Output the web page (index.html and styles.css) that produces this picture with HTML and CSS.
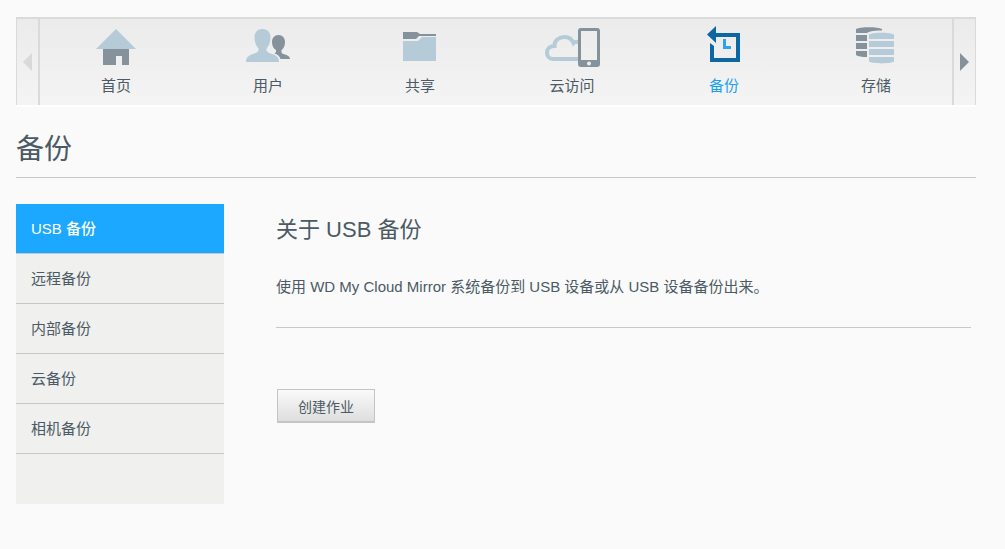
FILE: index.html
```html
<!DOCTYPE html>
<html lang="zh-CN">
<head>
  <meta charset="UTF-8">
  <meta name="viewport" content="width=device-width, initial-scale=1.0">
  <title>备份 - WD My Cloud Mirror</title>
  <link rel="stylesheet" href="styles.css">
</head>
<body>
  <!-- Main navigation -->
  <nav class="main-nav">
    <button class="nav-arrow nav-prev" type="button" aria-label="向左" disabled>
      <svg width="9" height="18" viewBox="0 0 9 18"><path d="M9 0v18L0 9z"/></svg>
    </button>
    <ul class="nav-list">
      <li>
        <a class="nav-item" href="#home">
          <svg class="nav-icon" viewBox="-6 0 60 42">
            <path class="light" d="M24 3L44 23H4z"/>
            <path class="dark" d="M11 23H37V39H30V30H24V39H11z"/>
          </svg>
          首页
        </a>
      </li>
      <li>
        <a class="nav-item" href="#users">
          <svg class="nav-icon" viewBox="-6 0 60 42">
            <path class="dark" d="M34.500 9C38.500 9 41 12 41 16C41 20 39.500 22.500 37.500 24V26.500C38 27.500 39 28 41 28.500C44 29.500 46 30.500 46 33H36.500C35.500 30 33.500 28.500 30.500 27.500L32 26V24C29.500 22.500 28 20 28 16C28 12 30.500 9 34.500 9z"/>
            <path class="light" d="M18.500 3C23.500 3 26.500 6.500 26.500 11C26.500 16 25 20 22.500 22.500V24.500C23 26 25 27 28 28C33 29.500 35 32 35 36H2C2 32 4 29.500 9 28C12 27 14 26 14.500 24.500V22.500C12 20 10.500 16 10.500 11C10.500 6.500 13.500 3 18.500 3z"/>
          </svg>
          用户
        </a>
      </li>
      <li>
        <a class="nav-item" href="#shares">
          <svg class="nav-icon" viewBox="-6 0 60 42">
            <path class="dark" d="M7 6H21L24 8H40V10H23L20 13H7z"/>
            <path class="light" d="M7 15H22L26 11H40V35H7z"/>
          </svg>
          共享
        </a>
      </li>
      <li>
        <a class="nav-item" href="#cloud">
          <svg class="nav-icon" viewBox="-6 0 60 42">
            <path class="cloud" d="M31 33H5C1 33 -1 30 -1 26.500C-1 22.500 2 20 6.500 20C6 14.500 11 11 16.500 11C21 11 24 13.500 25.500 17C27 15.500 29 15.500 31 16.500"/>
            <path class="dark" fill-rule="evenodd" d="M33 2H49Q52 2 52 5V38Q52 41 49 41H33Q30 41 30 38V5Q30 2 33 2zM33 5V34H49V5zM41 35.500A2 2 0 1 0 41 39.500A2 2 0 1 0 41 35.500z"/>
          </svg>
          云访问
        </a>
      </li>
      <li>
        <a class="nav-item active" href="#backups" aria-current="page">
          <svg class="nav-icon" viewBox="-6 0 60 42">
            <path class="blue-dark" d="M7 8.500L16 0V7H40V36H10V17L14 20V32H36V11H16V17z"/>
            <path class="blue" d="M23 13H26V20H31V23H23z"/>
          </svg>
          备份
        </a>
      </li>
      <li>
        <a class="nav-item" href="#storage">
          <svg class="nav-icon" viewBox="-6 0 60 42">
            <path class="dark" d="M4 3C8 0.500 26 0.500 30 3V4.500C24 4.500 18 5 15 7H4zM4 9H15V15H4zM4 17H15V23H4zM4 25H15V31C10 31 6 30.500 4 29z"/>
            <path class="light" d="M17 8.500C21 6 38 6 42 8.500V13H17zM17 15H42V21H17zM17 23H42V29H17zM17 31H42V35.500C38 38 21 38 17 35.500z"/>
          </svg>
          存储
        </a>
      </li>
    </ul>
    <button class="nav-arrow nav-next" type="button" aria-label="向右">
      <svg width="9" height="18" viewBox="0 0 9 18"><path d="M0 0v18L9 9z"/></svg>
    </button>
  </nav>

  <h1>备份</h1>

  <div class="page">
    <!-- Backup types -->
    <nav class="sidebar">
      <a class="active" href="#usb">USB 备份</a>
      <a href="#remote">远程备份</a>
      <a href="#internal">内部备份</a>
      <a href="#cloud-backup">云备份</a>
      <a href="#camera">相机备份</a>
    </nav>

    <main class="content">
      <h2>关于 USB 备份</h2>
      <p>使用 WD My Cloud Mirror 系统备份到 USB 设备或从 USB 设备备份出来。</p>
      <button class="btn" type="button">创建作业</button>
    </main>
  </div>
</body>
</html>
```

FILE: styles.css
```css
* {
  margin: 0;
  padding: 0;
  box-sizing: border-box;
}

body {
  padding: 17px 29px 40px 16px;
  background: #fafafa;
  color: #4b5a64;
  font-family: "Liberation Sans", "Noto Sans CJK SC", sans-serif;
  font-size: 15px;
  line-height: 24px;
}

a {
  color: inherit;
  text-decoration: none;
}

/* Main navigation */
.main-nav {
  display: flex;
  background: linear-gradient(#ebebeb, #f4f4f4);
  border-top: 2px solid #dadada;
  box-shadow: 0 2px 0 #fff;
}

.nav-arrow {
  display: flex;
  align-items: center;
  justify-content: center;
  width: 24px;
  background: none;
  border: 0 solid #dadada;
  cursor: pointer;
}

.nav-arrow svg {
  fill: #85929b;
}

.nav-arrow:disabled {
  cursor: default;
}

.nav-arrow:disabled svg {
  fill: #d9d9d9;
}

.nav-prev {
  border-width: 0 2px 0 1px;
}

.nav-next {
  border-width: 0 1px 0 2px;
}

.nav-list {
  flex: 1;
  display: grid;
  grid-template-columns: repeat(6, 1fr);
  list-style: none;
}

.nav-item {
  display: flex;
  flex-direction: column;
  align-items: center;
  gap: 6px;
  padding: 7px 0;
}

.nav-item.active {
  color: #1f9ff0;
}

.nav-icon {
  width: 60px;
  height: 42px;
}

.light {
  fill: #b5ccd8;
}

.dark {
  fill: #85929b;
}

.cloud {
  fill: none;
  stroke: #b5ccd8;
  stroke-width: 4;
}

.blue-dark {
  fill: #0d67a3;
}

.blue {
  fill: #2ba3ee;
}

h1 {
  margin-top: 25px;
  padding-bottom: 7px;
  border-bottom: 1px solid #c8c8c8;
  font-size: 28px;
  font-weight: normal;
  line-height: 40px;
}

.page {
  display: flex;
  gap: 52px;
  margin-top: 26px;
}

/* Sidebar */
.sidebar {
  flex: none;
  width: 208px;
  padding-bottom: 50px;
  background: #f0f0ee;
}

.sidebar a {
  display: block;
  padding: 13px 15px 12px;
  border-bottom: 1px solid #c4c8ca;
}

.sidebar a.active {
  background: #1ca8ff;
  color: #fff;
  font-weight: 500;
}

/* Content */
.content {
  flex: 1;
  padding: 10px 5px 0 0;
}

h2 {
  margin-bottom: 29px;
  font-size: 22px;
  font-weight: normal;
  line-height: 32px;
}

.content p {
  padding-bottom: 28px;
  border-bottom: 1px solid #c8c8c8;
}

.btn {
  height: 34px;
  margin: 61px 0 0 1px;
  padding: 0 20px;
  background: linear-gradient(#fafafa, #dedede);
  border: 1px solid #c4c4c4;
  border-bottom-width: 2px;
  color: inherit;
  font-family: inherit;
  font-size: 14px;
  cursor: pointer;
}
```
